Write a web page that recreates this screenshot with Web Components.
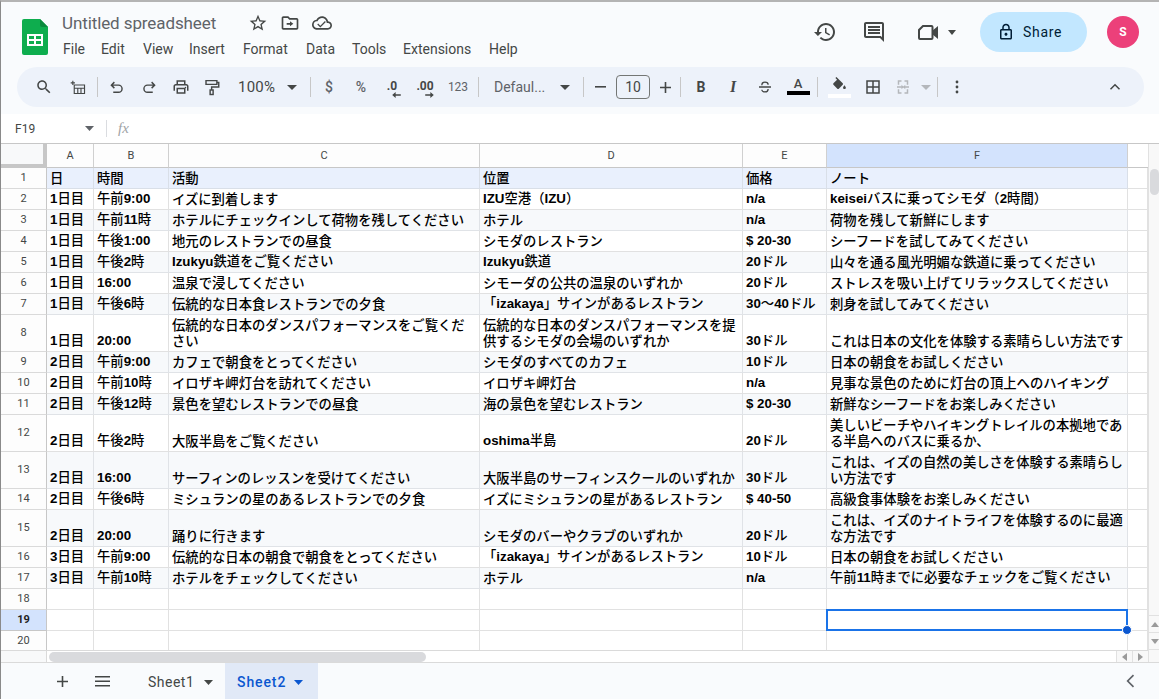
<!DOCTYPE html>
<html lang="ja"><head><meta charset="utf-8"><title>Untitled spreadsheet</title>
<style>
html,body{margin:0;padding:0;height:100%;overflow:hidden;background:#f9fbfd}
body{font-family:Roboto,"Liberation Sans","Noto Sans CJK JP",sans-serif}
</style></head><body>
<gs-app>
  <gs-titlebar></gs-titlebar>
  <gs-toolbar></gs-toolbar>
  <gs-formula cell="F19"></gs-formula>
  <gs-sheet></gs-sheet>
  <gs-tabs></gs-tabs>
</gs-app>
<script>
const svg=(d,size=24,fill='#444746',extra='')=>`<svg width="${size}" height="${size}" viewBox="0 0 24 24" fill="${fill}" ${extra}>${d.startsWith('<')?d:`<path d="${d}"/>`}</svg>`;
const line=(d,size=24,c='#444746',w=2)=>`<svg width="${size}" height="${size}" viewBox="0 0 24 24" fill="none" stroke="${c}" stroke-width="${w}">${d}</svg>`;
const caret=(c='#444746',w=10)=>`<svg width="${w}" height="5" viewBox="0 0 10 5" preserveAspectRatio="none"><path d="M0 0h10L5 5z" fill="${c}"/></svg>`;

class GsApp extends HTMLElement{constructor(){super();this.attachShadow({mode:'open'}).innerHTML=`<style>
:host{display:flex;flex-direction:column;height:699px;width:1159px;box-sizing:border-box;border-top:2px solid #b4b4b4;border-left:1px solid #8a8a8a;background:#f9fbfd;overflow:hidden}
</style><slot></slot>`}}

class GsTitlebar extends HTMLElement{constructor(){super();this.attachShadow({mode:'open'}).innerHTML=`<style>
:host{display:flex;align-items:flex-start;height:65px;flex:none;color:#444746;font-family:Roboto,"Liberation Sans",sans-serif}
.logo{margin:17px 0 0 21px;width:26px;height:36px;flex:none}
.col{margin-left:14px;display:flex;flex-direction:column}
.top{display:flex;align-items:center;height:24px;margin-top:9px}
.title{width:180px;font-size:17px;color:#5f6368;white-space:nowrap;letter-spacing:-.1px}
.slot{width:32px;display:flex;justify-content:center;align-items:center}
.menu{display:flex;margin-top:4px;font-size:14px;line-height:20px;color:#444746;margin-left:1px}
.menu span{white-space:nowrap}
.right{margin-left:auto;display:flex;align-items:center;height:40px;margin-top:10px;padding-right:20px}
.ic{width:40px;display:flex;justify-content:center}
.share{width:107px;height:40px;box-sizing:border-box;padding-left:17px;border-radius:20px;background:#c2e7ff;display:flex;align-items:center;gap:8px;font-size:14px;color:#001d35;margin-left:24px;letter-spacing:.7px}
.av{width:32px;height:32px;border-radius:50%;background:#ec407a;color:#fff;font-size:12px;font-weight:700;display:flex;align-items:center;justify-content:center;margin-left:20px}
</style>
<svg class="logo" viewBox="0 0 26 36"><path d="M2 0h16l8 8v26a2 2 0 0 1-2 2H2a2 2 0 0 1-2-2V2a2 2 0 0 1 2-2z" fill="#0ead4e"/><path d="M18 0l8 8h-6a2 2 0 0 1-2-2z" fill="#0a8a3d"/><path d="M5 15h16v12H5zM7 17v3h5v-3zm7 0v3h5v-3zM7 22v3h5v-3zm7 0v3h5v-3z" fill="#fff" fill-rule="evenodd"/></svg>
<div class="col">
 <div class="top"><span class="title">Untitled spreadsheet</span>
  <span class="slot">${svg('M22 9.24l-7.19-.62L12 2 9.19 8.63 2 9.24l5.46 4.73L5.82 21 12 17.27 18.18 21l-1.63-7.03L22 9.24zM12 15.4l-3.76 2.27 1-4.28-3.32-2.88 4.38-.38L12 6.1l1.71 4.04 4.38.38-3.32 2.88 1 4.28L12 15.4z',20)}</span>
  <span class="slot">${svg('M20 6h-8l-2-2H4c-1.1 0-2 .9-2 2v12c0 1.1.9 2 2 2h16c1.1 0 2-.9 2-2V8c0-1.1-.9-2-2-2zm0 12H4V6h5.17l2 2H20v10zM12 10v2H8v2h4v2l4-3z',20)}</span>
  <span class="slot">${svg('M19.35 10.04C18.67 6.59 15.64 4 12 4 9.11 4 6.6 5.64 5.35 8.04 2.34 8.36 0 10.91 0 14c0 3.31 2.69 6 6 6h13c2.76 0 5-2.24 5-5 0-2.64-2.05-4.78-4.65-4.96zM19 18H6c-2.21 0-4-1.79-4-4 0-2.05 1.53-3.76 3.56-3.97l1.07-.11.5-.95C8.08 7.14 9.94 6 12 6c2.62 0 4.88 1.86 5.39 4.43l.3 1.5 1.53.11c1.56.1 2.78 1.41 2.78 2.96 0 1.65-1.35 3-3 3zM10 15.2l-2.6-2.6-1.1 1.1 3.7 3.7 6.6-6.6-1.1-1.1z',20)}</span>
 </div>
 <div class="menu"><span style="width:38px">File</span><span style="width:42px">Edit</span><span style="width:46px">View</span><span style="width:54px">Insert</span><span style="width:63px">Format</span><span style="width:46px">Data</span><span style="width:51px">Tools</span><span style="width:86px">Extensions</span><span>Help</span></div>
</div>
<div class="right">
 <span class="ic">${svg('M13 3c-4.97 0-9 4.03-9 9H1l3.89 3.89.07.14L9 12H6c0-3.87 3.13-7 7-7s7 3.13 7 7-3.13 7-7 7c-1.93 0-3.68-.79-4.94-2.06l-1.42 1.42C8.27 19.99 10.51 21 13 21c4.97 0 9-4.03 9-9s-4.03-9-9-9zm-1 5v5l4.28 2.54.72-1.21-3.5-2.08V8H12z')}</span>
 <span class="ic" style="margin-left:9px">${svg('M21.99 4c0-1.1-.89-2-1.99-2H4c-1.1 0-2 .9-2 2v12c0 1.1.9 2 2 2h14l4 4-.01-18zM20 4v13.17L18.83 16H4V4h16zM6 12h12v2H6zm0-3h12v2H6zm0-3h12v2H6z')}</span>
 <span class="ic" style="margin-left:14px">${svg('<path d="M7 6h8.5a1 1 0 0 1 1 1v11a1 1 0 0 1-1 1H4a1 1 0 0 1-1-1V10z" fill="none" stroke="#444746" stroke-width="2"/><path d="M16 11l6-5v13l-6-5z" fill="#444746"/>')}</span>
 <span style="width:8px;display:flex;justify-content:center">${caret('#444746',8)}</span>
 <div class="share">${svg('M18 8h-1V6c0-2.76-2.24-5-5-5S7 3.24 7 6v2H6c-1.1 0-2 .9-2 2v10c0 1.1.9 2 2 2h12c1.1 0 2-.9 2-2V10c0-1.1-.9-2-2-2zM9 6c0-1.66 1.34-3 3-3s3 1.34 3 3v2H9V6zm9 14H6V10h12v10zm-6-3c1.1 0 2-.9 2-2s-.9-2-2-2-2 .9-2 2 .9 2 2 2z',18,'#001d35')}<span>Share</span></div>
 <div class="av">S</div>
</div>`}}

class GsToolbar extends HTMLElement{constructor(){super();
const it=(w,c,st='')=>`<span class="i" style="width:${w}px;${st}">${c}</span>`;
const sep=(m=0)=>`<span class="sep" style="margin-left:${m}px"></span>`;
const g='#444746';
this.attachShadow({mode:'open'}).innerHTML=`<style>
:host{display:flex;align-items:center;flex:none;height:40px;margin:0 15px 0 16px;padding:0 14px 0 11px;border-radius:20px;background:#edf2fa;color:#444746;font-family:Roboto,"Liberation Sans",sans-serif;font-size:14px}
.i{display:flex;align-items:center;justify-content:center;flex:none;height:40px;white-space:nowrap}
.sep{flex:none;width:1px;height:20px;background:#c7c7c7}
.box{box-sizing:border-box;width:34px;height:24px;border:1px solid #747775;border-radius:4px;display:flex;align-items:center;justify-content:center;font-size:14px}
.sm{font-size:12px;font-weight:500;color:#5f6368}
.b{font-size:14px;font-weight:700}
.up{position:relative;display:inline-flex;flex-direction:column;align-items:center}
</style>
${it(32,svg('M15.5 14h-.79l-.28-.27C15.41 12.59 16 11.11 16 9.5 16 5.91 13.09 3 9.5 3S3 5.91 3 9.5 5.91 16 9.5 16c1.61 0 3.09-.59 4.23-1.57l.27.28v.79l5 4.99L20.49 19l-4.99-5zm-6 0C7.01 14 5 11.99 5 9.5S7.01 5 9.5 5 14 7.01 14 9.5 11.99 14 9.5 14z',18))}
${it(37,line('<path d="M6 8.500h14.500V20.500H6zM6 13h14.500M11 13v7.500M15.500 13v7.500M4 2.500v6M1 5.500h6"/>',17,g,1.6))}
${sep()}
${it(38,line('<path d="M8.500 5.500L4.500 9.500l4 4M4.500 9.500H14a4.750 4.750 0 0 1 0 9.500H7"/>',18,g,1.9))}
${it(25,line('<path d="M15.500 5.500l4 4-4 4M19.500 9.500H10a4.750 4.750 0 0 0 0 9.500h7"/>',18,g,1.9))}
${it(40,svg('<path d="M19 8h-1V3H6v5H5c-1.66 0-3 1.34-3 3v6h4v4h12v-4h4v-6c0-1.66-1.34-3-3-3zM8 5h8v3H8V5zm8 14H8v-4h8v4zm2-2v-4H6v4H4v-6c0-.55.45-1 1-1h14c.55 0 1 .45 1 1v6h-2z"/><circle cx="18" cy="12.500" r="1"/>',18))}
${it(22,line('<path d="M4 3.500h14.500v5H4zM18.500 6H21v6H11.500v4"/><rect x="9.500" y="16" width="4" height="6"/>',18,g,1.9))}
${it(61,'<span>100%</span>','padding-left:15px;box-sizing:border-box;justify-content:flex-start;font-size:15px;letter-spacing:.2px')}
${it(16,caret())}
${sep(10)}
${it(36,'<span class="sm" style="font-size:14px">$</span>')}
${it(28,'<span class="sm" style="font-size:14px">%</span>')}
${it(34,`<span class="up" style="margin-top:5px"><span class="sm" style="font-weight:700;line-height:10px;color:#444746">.0</span><svg width="9" height="6" viewBox="0 0 10 7" style="margin-left:8px;margin-top:1px"><path d="M0 3.500L4 0v2.500h6v2H4V7z" fill="${g}"/></svg></span>`)}
${it(32,`<span class="up" style="margin-top:5px"><span class="sm" style="font-weight:700;line-height:10px;color:#444746">.00</span><svg width="9" height="6" viewBox="0 0 10 7" style="margin-left:8px;margin-top:1px"><path d="M10 3.500L6 0v2.500H0v2h6V7z" fill="${g}"/></svg></span>`)}
${it(34,'<span class="sm" style="font-weight:400">123</span>')}
${sep(3)}
${it(78,'<span style="color:#5f6368">Defaul...</span>','padding-left:15px;box-sizing:border-box;justify-content:flex-start')}
${it(16,caret())}
${sep(10)}
${it(32,`<svg width="11" height="2"><rect width="11" height="1.600" fill="${g}"/></svg>`)}
${it(34,'<span class="box">10</span>')}
${it(30,`<svg width="11" height="11"><path d="M4.700 0h1.600v4.700H11v1.600H6.300V11H4.700V6.300H0V4.700h4.700z" fill="${g}"/></svg>`)}
${sep()}
${it(40,'<span class="b">B</span>')}
${it(24,'<span style="font:italic 700 16px \'Liberation Serif\',serif">I</span>')}
${it(40,line('<path d="M4 12h16M7.800 9.500C7.800 7 9.500 5.500 12 5.500s4.200 1.500 4.200 3.500M16.200 14.500c0 2.500-1.700 4-4.200 4s-4.200-1.500-4.200-3"/>',18,g,1.7))}
${it(26,'<span class="up"><span style="font-size:13px;font-weight:500;line-height:13px;margin-top:-2px">A</span><span style="width:23px;height:4px;background:#000;margin-top:1px"></span></span>')}
${sep(6)}
${it(42,`<span class="up">${svg('M16.560 8.940L7.620 0 6.210 1.410l2.380 2.380-5.150 5.150c-.59.59-.59 1.540 0 2.120l5.500 5.500c.29.290.68.440 1.060.440s.77-.150 1.060-.440l5.500-5.500c.59-.580.59-1.530 0-2.120zM19 11.500s-2 2.170-2 3.500c0 1.100.9 2 2 2s2-.9 2-2c0-1.330-2-3.500-2-3.500z',17)}<span style="width:23px;height:4px;background:#fff"></span></span>`)}
${it(26,svg('M3 3v18h18V3H3zm8 16H5v-6h6v6zm0-8H5V5h6v6zm8 8h-6v-6h6v6zm0-8h-6V5h6v6z',18))}
${it(34,svg('M5 3h5v2H7v4H5zM14 3h5v6h-2V5h-3zM5 15h2v4h3v2H5zM17 15h2v6h-5v-2h3zM4 11h6V9l3 3-3 3v-2H4zM20 13h-5v2l-3-3 3-3v2h5z',18,'#b4b7bb'))}
${it(12,caret('#b4b7bb'))}
${sep(5)}
${it(38,`<svg width="4" height="14" viewBox="0 0 4 14"><circle cx="2" cy="2" r="1.400" fill="${g}"/><circle cx="2" cy="7" r="1.400" fill="${g}"/><circle cx="2" cy="12" r="1.400" fill="${g}"/></svg>`)}
<span style="flex:1"></span>
${it(30,line('<path d="M6 15l6-6 6 6"/>',18,g,2))}
`}}

class GsFormula extends HTMLElement{constructor(){super();this.attachShadow({mode:'open'}).innerHTML=`<style>
:host{display:flex;align-items:center;flex:none;height:30px;margin-top:7px;background:#fff;border-bottom:1px solid #c7c7c7;box-sizing:border-box;color:#444746;font-family:Roboto,"Liberation Sans",sans-serif;font-size:12px}
.n{width:70px;padding-left:14px;box-sizing:content-box}
.c{width:21px;display:flex}
.s{width:1px;height:17px;background:#dadce0}
.f{margin-left:11px;font:italic 15px "Liberation Serif",serif;color:#a0a3a6}
</style><span class="n">${this.getAttribute('cell')}</span><span class="c">${caret('#5f6368',9)}</span><span class="s"></span><span class="f">fx</span>`}}

const ROWS=[
[21,'日','時間','活動','位置','価格','ノート'],
[21,'1日目','午前9:00','イズに到着します','IZU空港（IZU）','n/a','keiseiバスに乗ってシモダ（2時間）'],
[21,'1日目','午前11時','ホテルにチェックインして荷物を残してください','ホテル','n/a','荷物を残して新鮮にします'],
[21,'1日目','午後1:00','地元のレストランでの昼食','シモダのレストラン','$ 20-30','シーフードを試してみてください'],
[21,'1日目','午後2時','Izukyu鉄道をご覧ください','Izukyu鉄道','20ドル','山々を通る風光明媚な鉄道に乗ってください'],
[21,'1日目','16:00','温泉で浸してください','シモーダの公共の温泉のいずれか','20ドル','ストレスを吸い上げてリラックスしてください'],
[21,'1日目','午後6時','伝統的な日本食レストランでの夕食','「izakaya」サインがあるレストラン','30〜40ドル','刺身を試してみてください'],
[37,'1日目','20:00','伝統的な日本のダンスパフォーマンスをご覧くだ\nさい','伝統的な日本のダンスパフォーマンスを提\n供するシモダの会場のいずれか','30ドル','これは日本の文化を体験する素晴らしい方法です'],
[21,'2日目','午前9:00','カフェで朝食をとってください','シモダのすべてのカフェ','10ドル','日本の朝食をお試しください'],
[21,'2日目','午前10時','イロザキ岬灯台を訪れてください','イロザキ岬灯台','n/a','見事な景色のために灯台の頂上へのハイキング'],
[21,'2日目','午後12時','景色を望むレストランでの昼食','海の景色を望むレストラン','$ 20-30','新鮮なシーフードをお楽しみください'],
[37,'2日目','午後2時','大阪半島をご覧ください','oshima半島','20ドル','美しいビーチやハイキングトレイルの本拠地であ\nる半島へのバスに乗るか、'],
[37,'2日目','16:00','サーフィンのレッスンを受けてください','大阪半島のサーフィンスクールのいずれか','30ドル','これは、イズの自然の美しさを体験する素晴らし\nい方法です'],
[21,'2日目','午後6時','ミシュランの星のあるレストランでの夕食','イズにミシュランの星があるレストラン','$ 40-50','高級食事体験をお楽しみください'],
[37,'2日目','20:00','踊りに行きます','シモダのバーやクラブのいずれか','20ドル','これは、イズのナイトライフを体験するのに最適\nな方法です'],
[21,'3日目','午前9:00','伝統的な日本の朝食で朝食をとってください','「izakaya」サインがあるレストラン','10ドル','日本の朝食をお試しください'],
[21,'3日目','午前10時','ホテルをチェックしてください','ホテル','n/a','午前11時までに必要なチェックをご覧ください'],
[21,'','','','','',''],[21,'','','','','',''],[21,'','','','','','']];

const runs=t=>t.replace(/[\x20-\x7e]+/g,m=>`<b>${m}</b>`);
class GsSheet extends HTMLElement{constructor(){super();
let h=`<div class="corner"></div>`+['A','B','C','D','E','F'].map(l=>`<div class="ch${l==='F'?' sel':''}">${l}</div>`).join('')+`<div class="ch blank"></div>`;
ROWS.forEach((r,i)=>{const n=i+1,cls=n===1?'hd':(n%2&&n<=17?'st':'');
 h+=`<div class="rh${n===19?' sel':''}">${n}</div>`;
 for(let c=1;c<=6;c++){const t=r[c];const isSel=n===19&&c===6;
  h+=`<div class="c ${cls}">${t?`<span>${runs(t)}</span>`:''}${isSel?'<span class="cursor"></span><span class="dot"></span>':''}</div>`}
 h+=`<div class="c"></div>`;
});
this.attachShadow({mode:'open'}).innerHTML=`<style>
:host{display:flex;flex:none;height:518px;background:#fff;overflow:hidden;font-family:"Noto Sans CJK JP","Liberation Sans",sans-serif;color:#000}
.wrap{display:flex;flex-direction:column;width:1147px;flex:none}
.grid{display:grid;flex:1;min-height:0;overflow:hidden;grid-template-columns:46px 47px 75px 311px 263px 84px 301px 20px;grid-template-rows:24px ${ROWS.map(r=>r[0]+'px').join(' ')};align-content:start}
.corner{background:#f8f9fa;border-right:4px solid #c7c7c7;border-bottom:4px solid #c7c7c7;box-sizing:border-box}
.ch{display:flex;align-items:center;justify-content:center;font:11px Roboto,"Liberation Sans",sans-serif;color:#444746;border-right:1px solid #d0d0d0;border-bottom:1px solid #c7c7c7;box-sizing:border-box;background:#fdfdfd}
.ch.sel{background:#d3e3fd}
.ch.blank{border-right:0;background:#fff}
.rh{display:flex;align-items:center;justify-content:center;font:11px Roboto,"Liberation Sans",sans-serif;color:#444746;border-right:1px solid #c7c7c7;border-bottom:1px solid #dadada;box-sizing:border-box;background:#fdfdfd;padding-bottom:1px}
.rh.sel{background:#d3e3fd;font-weight:700;color:#1f1f1f;border-bottom-color:#c7c7c7}
.c{position:relative;box-sizing:border-box;border-right:1px solid #e1e1e1;border-bottom:1px solid #e1e1e1;padding:0 2px 2px 3px;font-size:13.33px;font-weight:500;line-height:16px;white-space:pre;display:flex;align-items:flex-end;overflow:visible}
.c b{font-family:"Liberation Sans",sans-serif;font-weight:700}
.c.st{background:#f7f9fb;border-color:#e0e3e7}
.c.hd{background:#e9f0fd;border-color:#d9dfe8}
.cursor{position:absolute;left:-1px;top:-1px;right:-1px;bottom:-1px;border:2px solid #1a73e8;pointer-events:none}
.dot{position:absolute;right:-5px;bottom:-5px;width:8px;height:8px;border-radius:50%;background:#0b57d0;border:1px solid #fff;z-index:2}
.hbar{flex:none;height:11px;display:flex;background:#fff;border-top:1px solid #dadada}
.hl{width:46px;background:#f8f9fa;border-right:1px solid #dadada;box-sizing:border-box}
.thumb{width:377px;height:10px;margin:1px 0 0 2px;border-radius:5px;background:#d9dadd}
.arrows{margin-left:auto;display:flex;height:11px}
.ab{width:16px;display:flex;align-items:center;justify-content:center;background:#f8f8f8;border-left:1px solid #e1e1e1;box-sizing:border-box}
.v{width:12px;flex:none;background:#f8f8f8;border-left:1px solid #e1e1e1;box-sizing:border-box;display:flex;flex-direction:column}
.vt{width:9px;height:26px;margin:25px 0 0 1px;border-radius:5px;background:#d9dadd}
.vb{height:16px;display:flex;align-items:center;justify-content:center;border-top:1px solid #e1e1e1;background:#f8f8f8}
.sp{flex:1}
</style>
<div class="wrap"><div class="grid">${h}</div>
<div class="hbar"><div class="hl"></div><div class="thumb"></div><div class="arrows"><span class="ab"><svg width="5" height="8"><path d="M5 0v8L0 4z" fill="#9a9a9a"/></svg></span><span class="ab"><svg width="5" height="8"><path d="M0 0v8l5-4z" fill="#9a9a9a"/></svg></span></div></div></div>
<div class="v"><div class="vt"></div><div class="sp"></div><div class="vb"><svg width="8" height="5"><path d="M0 5h8L4 0z" fill="#9a9a9a"/></svg></div><div class="vb"><svg width="8" height="5"><path d="M0 0h8L4 5z" fill="#9a9a9a"/></svg></div><div style="height:12px;border-top:1px solid #e1e1e1"></div></div>`}}

class GsTabs extends HTMLElement{constructor(){super();this.attachShadow({mode:'open'}).innerHTML=`<style>
:host{display:flex;align-items:center;flex:1;min-height:0;background:#f9fbfd;border-top:1px solid #dadada;color:#444746;font-family:Roboto,"Liberation Sans",sans-serif;font-size:14px;letter-spacing:.5px}
.ic{display:flex;align-items:center;justify-content:center;height:100%}
.tab{display:flex;align-items:center;height:100%;box-sizing:border-box;padding-top:2px}
.t1{margin-left:9px;width:93px;padding-left:16px;gap:10px}
.t2{width:93px;padding-left:12px;gap:8px;background:#e1e9f7;color:#0b57d0;font-weight:500;letter-spacing:.9px}
</style>
<span class="ic" style="width:40px;margin-left:41px"><svg width="11" height="11"><path d="M4.700 0h1.600v4.700H11v1.600H6.300V11H4.700V6.300H0V4.700h4.700z" fill="#444746"/></svg></span>
<span class="ic" style="width:40px"><svg width="15" height="11"><path d="M0 0h15v1.500H0zM0 4.500h15V6H0zM0 9h15v1.500H0z" fill="#444746"/></svg></span>
<div class="tab t1" style="margin-left:10px"><span>Sheet1</span>${caret('#444746',9)}</div>
<div class="tab t2"><span>Sheet2</span>${caret('#0b57d0',9)}</div>
<span class="ic" style="margin-left:auto;width:30px;margin-right:13px">${line('<path d="M15 5l-7 7 7 7"/>',20,'#5f6368',2)}</span>`}}

customElements.define('gs-app',GsApp);
customElements.define('gs-titlebar',GsTitlebar);
customElements.define('gs-toolbar',GsToolbar);
customElements.define('gs-formula',GsFormula);
customElements.define('gs-sheet',GsSheet);
customElements.define('gs-tabs',GsTabs);
</script>
</body></html>
